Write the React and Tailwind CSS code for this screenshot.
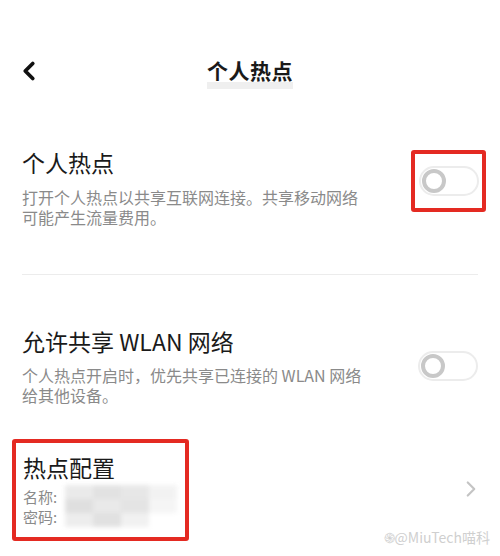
import { ChevronLeft, ChevronRight } from 'lucide-react';

const Toggle = () => (
    <div className="relative w-[60px] h-[30px] rounded-full border-2 border-[#ececec] bg-white">
        <div className="absolute left-[1px] top-[1px] w-[24px] h-[24px] rounded-full border-[4px] border-[#c8c8c8] bg-white" />
    </div>
);

const App = () => {
    return (
        <div className="w-[500px] h-[556px] bg-white overflow-hidden text-[#1a1a1a]" style={{ fontFamily: '"Noto Sans CJK SC", "Noto Sans", sans-serif' }}>
            {/* Top bar */}
            <header className="relative flex items-center justify-center h-[60px] mt-[40px]">
                <ChevronLeft className="absolute left-[14px] top-[16px] w-[30px] h-[30px] text-[#111]" strokeWidth={3} />
                <div className="relative">
                    <span className="absolute left-0 right-0 top-[22px] h-[7px] bg-[#efefef]" />
                    <h1 className="relative text-[21px] font-bold leading-none tracking-[0.5px]">个人热点</h1>
                </div>
            </header>

            {/* Hotspot toggle */}
            <section className="flex items-center justify-between pl-[22px] pr-[14px] pt-[47px]">
                <div>
                    <h2 className="text-[23px] leading-[30px]">个人热点</h2>
                    <p className="mt-[10px] text-[16px] leading-[20px] text-[#8a8a8a] w-[340px]">
                        打开个人热点以共享互联网连接。共享移动网络可能产生流量费用。
                    </p>
                </div>
                <div className="flex items-center justify-center w-[75px] h-[62px] border-[4px] border-[#e42a22] rounded-[3px] -mt-[12px]">
                    <Toggle />
                </div>
            </section>

            <div className="mx-[22px] mt-[47px] h-[1px] bg-[#ececec]" />

            {/* WLAN share */}
            <section className="flex items-center justify-between pl-[22px] pr-[22px] pt-[51px]">
                <div>
                    <h2 className="text-[23px] leading-[30px]">允许共享 WLAN 网络</h2>
                    <p className="mt-[9px] text-[16px] leading-[20px] text-[#8a8a8a] w-[352px]">
                        个人热点开启时，优先共享已连接的 WLAN 网络给其他设备。
                    </p>
                </div>
                <Toggle />
            </section>

            {/* Config */}
            <section className="flex items-start justify-between pl-[12px] pr-[16px] mt-[34px]">
                <div className="w-[177px] h-[102px] border-[4px] border-[#e42a22] rounded-[3px] pl-[7px] pt-[9px]">
                    <h2 className="text-[23px] leading-[30px]">热点配置</h2>
                    <div className="relative mt-[5px] text-[15px] leading-[20px] text-[#8a8a8a]">
                        <div>名称:</div>
                        <div>密码:</div>
                        <div className="absolute left-[42px] top-[-2px] w-[112px] h-[42px] grid grid-cols-4 grid-rows-3 blur-[2px] opacity-80">
                            <span className="bg-[#e6e6e6]" /><span className="bg-[#dcdcdc]" /><span className="bg-[#e2e2e2]" /><span className="bg-[#f0f0f0]" />
                            <span className="bg-[#d8d8d8]" /><span className="bg-[#e4e4e4]" /><span className="bg-[#dedede]" /><span className="bg-[#f3f3f3]" />
                            <span className="bg-[#e9e9e9]" /><span className="bg-[#dadada]" /><span className="bg-[#eeeeee]" /><span className="bg-white" />
                        </div>
                    </div>
                </div>
                <div className="flex flex-col items-end">
                    <ChevronRight className="w-[26px] h-[26px] text-[#c4c4c4] mt-[37px]" strokeWidth={2} />
                    <span className="mt-[28px] text-[14px] leading-none text-[#cfcfcf] -mr-[6px]">
                        ֍@MiuTech喵科
                    </span>
                </div>
            </section>
        </div>
    );
};

export default App;
